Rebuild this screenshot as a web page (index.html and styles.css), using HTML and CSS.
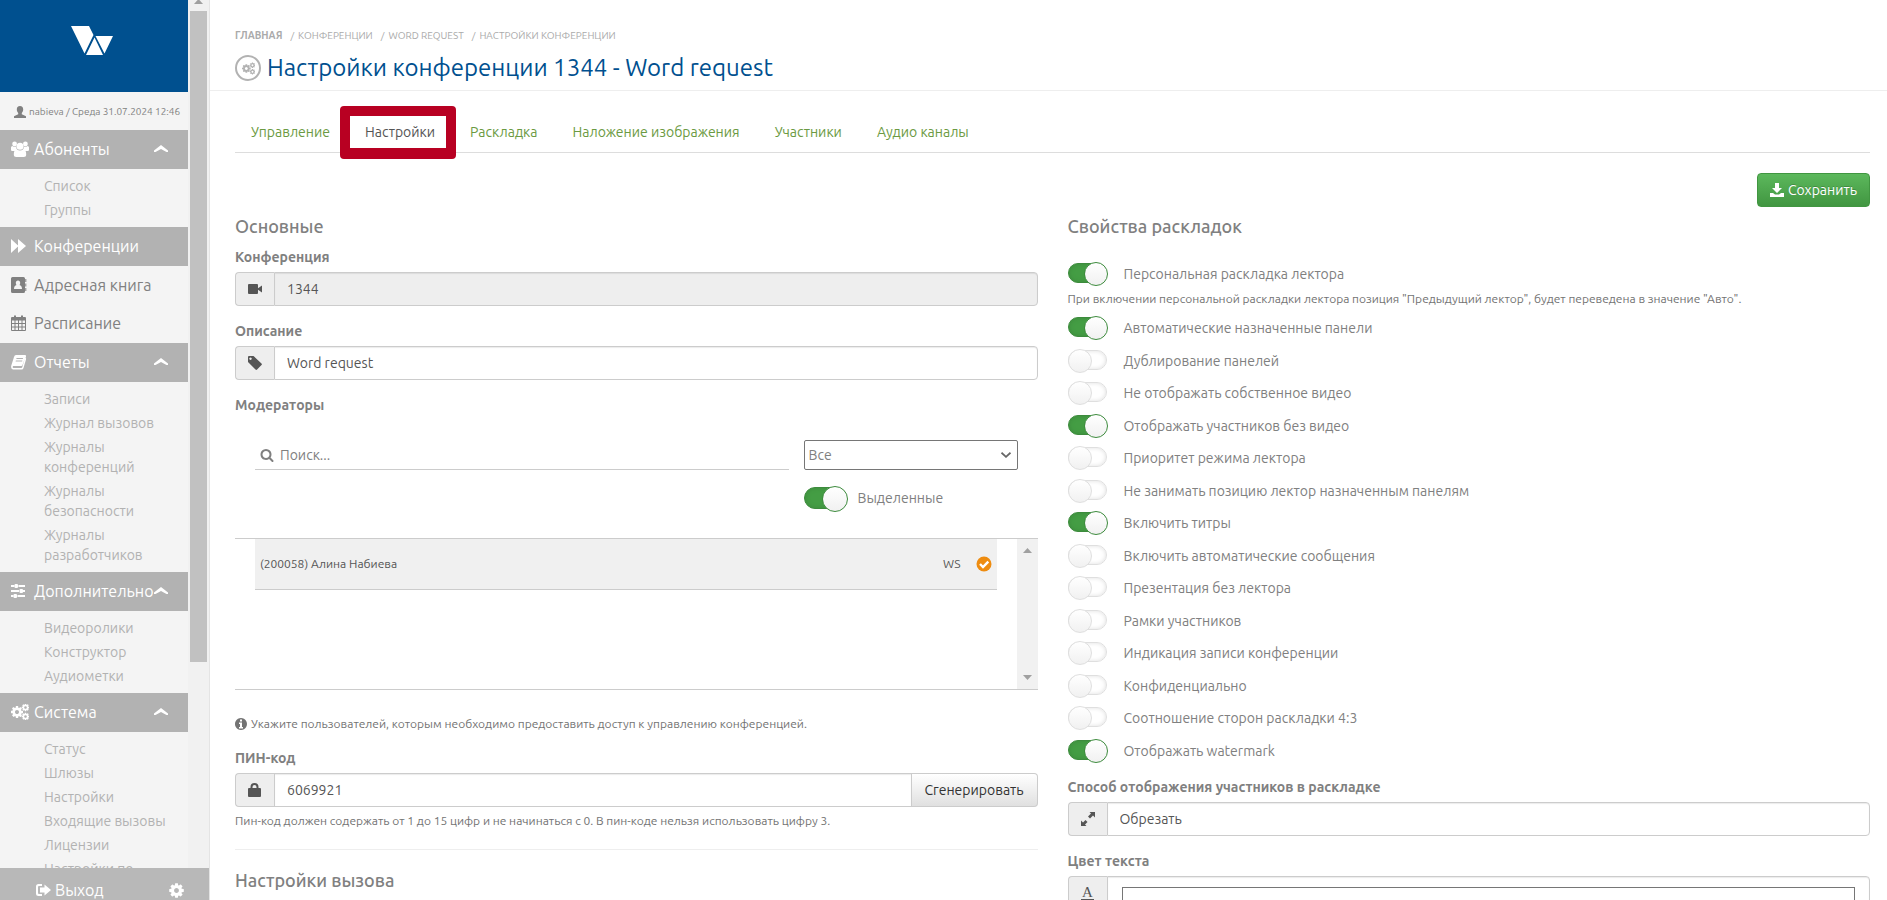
FILE: index.html
```html
<!DOCTYPE html>
<html lang="ru">
<head>
<meta charset="utf-8">
<title>Настройки конференции 1344</title>
<link rel="stylesheet" href="styles.css">
</head>
<body>
<svg class="sprite" aria-hidden="true">
  <symbol id="cog" viewBox="0 0 1792 1792"><path d="M1152 896q0-106-75-181t-181-75-181 75-75 181 75 181 181 75 181-75 75-181zm512-109v222q0 12-8 23t-20 13l-185 28q-19 54-39 91 35 50 107 138 10 12 10 25t-9 23q-27 37-99 108t-94 71q-12 0-26-9l-138-108q-44 23-91 38-16 136-29 186-7 28-36 28h-222q-14 0-24.5-8.5t-11.5-21.5l-28-184q-49-16-90-37l-141 107q-10 9-25 9-14 0-25-11-126-114-165-168-7-10-7-23 0-12 8-23 15-21 51-66.5t54-70.5q-27-50-41-99l-183-27q-13-2-21-12.5t-8-23.5v-222q0-12 8-23t19-13l186-28q14-46 39-92-40-57-107-138-10-12-10-24 0-10 9-23 26-36 98.5-107.5t94.5-71.5q13 0 26 10l138 107q44-23 91-38 16-136 29-186 7-28 36-28h222q14 0 24.5 8.5t11.5 21.5l28 184q49 16 90 37l142-107q9-9 24-9 13 0 25 10 129 119 165 170 7 8 7 22 0 12-8 23-15 21-51 66.5t-54 70.5q26 50 41 98l183 28q13 2 21 12.5t8 23.5z"/></symbol>
  <symbol id="cogs" viewBox="0 0 18 16"><use href="#cog" x="-1" y="1" width="14" height="14"/><use href="#cog" x="10" y="-1" width="9" height="9"/><use href="#cog" x="10" y="8" width="9" height="9"/></symbol>
  <symbol id="users" viewBox="0 0 18 16"><circle cx="3.6" cy="3" r="2.4"/><circle cx="14.4" cy="3" r="2.4"/><path d="M0 9V6.5Q0 5 1.5 5q2 1.6 3.6.6.1 2.400 1.600 3.900L5 10H1.300Q0 10 0 9zM18 9V6.500Q18 5 16.500 5q-2 1.600-3.600.6-.1 2.400-1.600 3.900L13 10h3.700Q18 10 18 9z"/><circle cx="9" cy="5.300" r="3.500"/><path d="M2.800 13.500q0-5 3-5 3.200 2 6.400 0 3 0 3 5 0 2.500-2.500 2.500H5.300q-2.500 0-2.500-2.500z"/></symbol>
  <symbol id="chevron" viewBox="0 0 14 7"><path d="M0 5.500 7 0 14 5.500V7H12.500L7 4 1.500 7H0z"/></symbol>
</svg>
<div class="app">
  <aside class="sidebar">
    <div class="side-scroll">
      <div class="side-body">
        <a class="logo" href="#" aria-label="Главная"><svg width="42" height="29" viewBox="0 0 42 29"><path d="M0 0h18l4.500 9-9 18.500zM24.500 10H42l-8.500 17.500zM23.500 11.500 32 29H15z"/></svg></a>
        <div class="user"><svg width="12" height="12" viewBox="0 0 12 12"><path d="M6 0c2.200 0 3.200 1.500 3.200 3.500 0 1.600-.7 2.500-1.400 3.400v1.300L12 10.300V12H0v-1.700l4.200-2.100V6.900C3.500 6 2.800 5.100 2.800 3.500 2.800 1.500 3.800 0 6 0z"/></svg><span>nabieva / Среда 31.07.2024 12:46</span></div>
        <nav>
          <a class="item dark" href="#"><svg class="ico" width="18" height="16"><use href="#users"/></svg><span>Абоненты</span><svg class="chev" width="14" height="7"><use href="#chevron"/></svg></a>
          <ul class="sub"><li><a href="#">Список</a></li><li><a href="#">Группы</a></li></ul>
          <a class="item dark" href="#"><svg class="ico" width="18" height="16" viewBox="0 0 18 16"><path d="M0 1l7 6.500V1l8 7-8 7V8.500L0 15z"/></svg><span>Конференции</span></a>
          <a class="item" href="#"><svg class="ico" width="18" height="16" viewBox="0 0 18 16"><path fill-rule="evenodd" d="M1.500 0h11Q14 0 14 1.500v13q0 1.500-1.500 1.500h-11Q0 16 0 14.500v-13Q0 0 1.500 0zM7 3.500C5.600 3.500 4.800 4.400 4.800 6c0 .9.400 1.500.7 2C4 8.400 3 9.500 3 12h8c0-2.500-1-3.600-2.500-4 .3-.5.7-1.100.7-2C9.200 4.400 8.400 3.500 7 3.500zM14.300 2h1v3h-1zM14.300 6.500h1v3h-1zM14.300 11h1v3h-1z"/></svg><span>Адресная книга</span></a>
          <a class="item" href="#"><svg class="ico" width="18" height="16" viewBox="0 0 18 16"><path fill-rule="evenodd" d="M1 2h2V.5h2V2h5V.5h2V2h2q1 0 1 1v12q0 1-1 1H1q-1 0-1-1V3q0-1 1-1zM1 5.500V8h2.500V5.500zm3.500 0V8h2.500V5.500zM8 5.500V8h2.500V5.500zm3.500 0V8H14V5.500zM1 9v2.500h2.500V9zm3.500 0v2.500H7V9zM8 9v2.500h2.500V9zm3.500 0v2.500H14V9zM1 12.500V15h2.500v-2.500zm3.500 0V15H7v-2.500zm3.500 0V15h2.500v-2.500zm3.500 0V15H14v-2.500z"/></svg><span>Расписание</span></a>
          <a class="item dark" href="#"><svg class="ico" width="18" height="16" viewBox="0 0 18 16"><path fill-rule="evenodd" d="M5 1h9q1.300 0 1 1.500L14.600 4q.8.300.4 1.500L12.500 14q-.4 1.500-2 1.500H2Q-.5 15 .3 11.500L3 3q.5-2 2-2zM5.600 4l-.3 1h6.500l.3-1zM4.900 6.500l-.3 1h6.500l.3-1zM2 12q-.8 2 .5 2h7.800q.7 0 1-1l2.500-8.500L11.500 11q-.3 1-1.300 1z"/></svg><span>Отчеты</span><svg class="chev" width="14" height="7"><use href="#chevron"/></svg></a>
          <ul class="sub"><li><a href="#">Записи</a></li><li><a href="#">Журнал вызовов</a></li><li><a href="#">Журналы конференций</a></li><li><a href="#">Журналы безопасности</a></li><li><a href="#">Журналы разработчиков</a></li></ul>
          <a class="item dark" href="#"><svg class="ico" width="18" height="16" viewBox="0 0 18 16"><path d="M0 2h3.500v2H0zM7.500 2H14v2H7.500zM0 7h8v2H0zM12 7h2v2h-2zM0 12h2.500v2H0zM6.500 12H14v2H6.500z"/><rect x="3.500" y="1" width="3.500" height="4" rx="1"/><rect x="8.500" y="6" width="3.500" height="4" rx="1"/><rect x="2.500" y="11" width="3.500" height="4" rx="1"/></svg><span>Дополнительно</span><svg class="chev" width="14" height="7"><use href="#chevron"/></svg></a>
          <ul class="sub"><li><a href="#">Видеоролики</a></li><li><a href="#">Конструктор</a></li><li><a href="#">Аудиометки</a></li></ul>
          <a class="item dark" href="#"><svg class="ico" width="18" height="16"><use href="#cogs"/></svg><span>Система</span><svg class="chev" width="14" height="7"><use href="#chevron"/></svg></a>
          <ul class="sub"><li><a href="#">Статус</a></li><li><a href="#">Шлюзы</a></li><li><a href="#">Настройки</a></li><li><a href="#">Входящие вызовы</a></li><li><a href="#">Лицензии</a></li><li><a href="#">Настройки по</a></li></ul>
        </nav>
      </div>
      <div class="track"><svg width="9" height="4" viewBox="0 0 9 4"><path d="M4.500-1 9 4H0z"/></svg><div class="thumb"></div></div>
    </div>
    <div class="side-foot">
      <a href="#"><svg width="15" height="12" viewBox="0 0 15 12"><path d="M6 0v2H3Q2 2 2 3v6q0 1 1 1h3v2H2.500Q0 12 0 9.500v-7Q0 0 2.500 0zM8.500.5l6.500 5.500-6.500 5.500V8.500H4v-5h4.500z"/></svg>Выход</a>
      <a href="#" aria-label="Параметры"><svg width="17" height="17"><use href="#cog"/></svg></a>
    </div>
  </aside>
  <main class="main">
    <header class="head">
      <ol class="crumbs"><li><a href="#"><b>Главная</b></a></li><li><a href="#">Конференции</a></li><li><a href="#">Word request</a></li><li>Настройки конференции</li></ol>
      <h1><span class="ring"><svg width="13" height="13"><use href="#cogs"/></svg></span>Настройки конференции 1344 - Word request</h1>
    </header>
    <div class="content">
      <nav class="tabs"><a href="#">Управление</a><a class="active" href="#">Настройки</a><a href="#">Раскладка</a><a href="#">Наложение изображения</a><a href="#">Участники</a><a href="#">Аудио каналы</a></nav>
      <div class="actions"><button class="save" type="button"><svg width="14" height="14" viewBox="0 0 14 14"><path d="M5 0h4v5h3L7 10 2 5h3zM0 10h3l2 1.500h4L11 10h3v4H0z"/></svg>Сохранить</button></div>
      <form class="cols">
        <section>
          <h2>Основные</h2>
          <label class="lbl" for="conf">Конференция</label>
          <div class="group"><span class="addon"><svg width="14" height="14" viewBox="0 0 14 14"><rect y="2" width="10" height="10" rx="1"/><path d="M10 6.200 14 3.500v7L10 7.800z"/></svg></span><input id="conf" type="text" value="1344" disabled></div>
          <label class="lbl" for="desc">Описание</label>
          <div class="group"><span class="addon"><svg width="14" height="14" viewBox="0 0 14 14"><path fill-rule="evenodd" d="M0 1Q0 0 1 0h4.500l8 7.500q.8.800 0 1.600l-4.400 4.400q-.8.800-1.600 0L0 6zM2.500 1.500a1.200 1.200 0 1 0 .01 0z"/></svg></span><input id="desc" type="text" value="Word request"></div>
          <label class="lbl" for="search">Модераторы</label>
          <div class="filter">
            <div class="search"><svg width="14" height="14" viewBox="0 0 1792 1792"><path d="M1216 832q0-185-131.500-316.500t-316.500-131.500-316.500 131.500-131.500 316.500 131.500 316.500 316.500 131.500 316.500-131.500 131.500-316.500zm512 832q0 52-38 90t-90 38q-54 0-90-38l-343-342q-179 124-399 124-143 0-273.500-55.500t-225-150-150-225-55.500-273.500 55.500-273.500 150-225 225-150 273.500-55.500 273.500 55.500 225 150 150 225 55.500 273.500q0 220-124 399l343 343q37 37 37 90z"/></svg><input id="search" type="text" placeholder="Поиск..."></div>
            <div class="pick">
              <div class="drop"><select aria-label="Фильтр"><option>Все</option></select><svg width="10" height="6" viewBox="0 0 10 6"><path d="M.5.7 5 4.800 9.500.7" fill="none" stroke="#666" stroke-width="1.800"/></svg></div>
              <label class="big"><input class="sw" type="checkbox" checked>Выделенные</label>
            </div>
          </div>
          <div class="list">
            <div class="rows"><div class="row"><span>(200058) Алина Набиева</span><span>WS</span><svg width="16" height="16" viewBox="0 0 16 16"><circle cx="8" cy="8" r="7.500" fill="#ee8c10"/><path d="M4 8l3 3 5.300-5.300" fill="none" stroke="#fff" stroke-width="2.400"/></svg></div></div>
            <div class="bar"><svg width="9" height="5" viewBox="0 0 9 5"><path d="M4.500 0 9 5H0z"/></svg><svg width="9" height="5" viewBox="0 0 9 5"><path d="M4.500 5 9 0H0z"/></svg></div>
          </div>
          <p class="note info"><svg width="12" height="12" viewBox="0 0 12 12"><path fill-rule="evenodd" d="M6 0a6 6 0 1 1-.01 0zM5 1.500v2h2v-2zM4 4.500V6h1v3H4v1.500h4V9H7V4.500z"/></svg>Укажите пользователей, которым необходимо предоставить доступ к управлению конференцией.</p>
          <label class="lbl" for="pin">ПИН-код</label>
          <div class="group"><span class="addon"><svg width="14" height="14" viewBox="0 0 14 14"><path fill-rule="evenodd" d="M2.500 5V4Q2.500 0 6.500 0t4 4v1h1.500q1 0 1 1v7q0 1-1 1H1q-1 0-1-1V6q0-1 1-1zM4.500 5h4V4q0-2-2-2t-2 2z"/></svg></span><input id="pin" type="text" value="6069921"><button class="gen" type="button">Сгенерировать</button></div>
          <p class="note">Пин-код должен содержать от 1 до 15 цифр и не начинаться с 0. В пин-коде нельзя использовать цифру 3.</p>
          <hr>
          <h2>Настройки вызова</h2>
        </section>
        <section>
          <h2>Свойства раскладок</h2>
          <label class="opt first"><input class="sw" type="checkbox" checked>Персональная раскладка лектора</label>
          <p class="note tight">При включении персональной раскладки лектора позиция "Предыдущий лектор", будет переведена в значение "Авто".</p>
          <div class="opts">
            <label class="opt"><input class="sw" type="checkbox" checked>Автоматические назначенные панели</label>
            <label class="opt"><input class="sw" type="checkbox">Дублирование панелей</label>
            <label class="opt"><input class="sw" type="checkbox">Не отображать собственное видео</label>
            <label class="opt"><input class="sw" type="checkbox" checked>Отображать участников без видео</label>
            <label class="opt"><input class="sw" type="checkbox">Приоритет режима лектора</label>
            <label class="opt"><input class="sw" type="checkbox">Не занимать позицию лектор назначенным панелям</label>
            <label class="opt"><input class="sw" type="checkbox" checked>Включить титры</label>
            <label class="opt"><input class="sw" type="checkbox">Включить автоматические сообщения</label>
            <label class="opt"><input class="sw" type="checkbox">Презентация без лектора</label>
            <label class="opt"><input class="sw" type="checkbox">Рамки участников</label>
            <label class="opt"><input class="sw" type="checkbox">Индикация записи конференции</label>
            <label class="opt"><input class="sw" type="checkbox">Конфиденциально</label>
            <label class="opt"><input class="sw" type="checkbox">Соотношение сторон раскладки 4:3</label>
            <label class="opt"><input class="sw" type="checkbox" checked>Отображать watermark</label>
          </div>
          <label class="lbl" for="mode">Способ отображения участников в раскладке</label>
          <div class="group"><span class="addon"><svg width="16" height="16" viewBox="0 0 16 16"><path d="M9.500 1H15v5.500l-2-2-3 3L8 5.500l3-3zM6.500 15H1V9.500l2 2 2.500-2.500 2 2L5 13.500z"/></svg></span><select id="mode"><option>Обрезать</option></select></div>
          <label class="lbl" for="color">Цвет текста</label>
          <div class="group"><span class="addon"><span class="letter">A</span></span><span class="well"><input id="color" type="color" value="#ffffff"></span></div>
        </section>
      </form>
    </div>
  </main>
</div>
</body>
</html>
```

FILE: styles.css
```css
* { box-sizing: border-box; }
body { margin: 0; font: 14px/20px Ubuntu, "Noto Sans", sans-serif; color: #808080; background: #fff; }
a { color: inherit; text-decoration: none; }
svg { fill: currentColor; flex: none; display: block; }
input, select, button { font: inherit; color: inherit; margin: 0; }
ul, ol { list-style: none; margin: 0; padding: 0; }
.sprite { position: absolute; width: 0; height: 0; }
.app { display: flex; height: 100vh; overflow: hidden; }

.sidebar { width: 210px; flex: none; display: flex; flex-direction: column; background: #f4f4f4; border-right: 1px solid #e4e4e4; }
.side-scroll { flex: 1; min-height: 0; display: flex; overflow: hidden; }
.side-body { flex: 1; overflow: hidden; }
.track { width: 21px; padding: 0 2px; background: #f1f1f1; color: #a0a0a0; display: flex; flex-direction: column; align-items: center; gap: 7px; }
.thumb { width: 100%; flex: none; height: 75%; background: #c1c1c1; }
.logo { height: 92px; background: #00508f; color: #fff; display: flex; justify-content: center; padding: 26px 4px 0 0; }
.user { height: 38px; display: flex; align-items: center; gap: 3px; padding: 2px 0 0 14px; font: 10px/16px "Ubuntu Condensed", Ubuntu, sans-serif; white-space: nowrap; }
.item { height: 39px; display: flex; align-items: center; gap: 5px; padding: 0 20px 1px 11px; font-size: 16px; }
.item:nth-of-type(3) { height: 38px; }
.dark { background: #b2b2b2; color: #fff; }
.item span { flex: 1; min-width: 0; white-space: nowrap; }
.chev { margin-bottom: 1px; }
.sub { padding: 5px 10px 5px 44px; color: #b2b2b2; }
.sub a { display: block; padding: 2px 0; }
.side-foot { height: 32px; flex: none; background: #b8b8b8; color: #fff; display: flex; justify-content: space-between; align-items: flex-end; padding: 0 24px 0 36px; font-size: 16px; overflow: hidden; }
.side-foot a { display: flex; align-items: center; gap: 4px; }
.side-foot a:last-child { padding-bottom: 1px; }

.main { flex: 1; min-width: 0; overflow: hidden; }
.head { height: 91px; padding: 26px 25px 0; border-bottom: 1px solid #eee; }
.crumbs { display: flex; font-size: 10px; text-transform: uppercase; color: #aaa; }
.crumbs li + li::before { content: "/"; padding: 0 4px 0 8px; }
h1 { display: flex; align-items: center; gap: 6px; margin: 7px 0 0; font-size: 24px; line-height: 30px; font-weight: 400; color: #00508f; }
.ring { width: 26px; height: 26px; border: 2px solid #b2b2b2; border-radius: 50%; color: #b2b2b2; display: flex; align-items: center; justify-content: center; }
.content { padding: 20px 17px 0 25px; }
.tabs { display: flex; height: 42px; border-bottom: 1px solid #ddd; color: #6b9a42; padding-left: 16px; gap: 35px; align-items: center; }
.active { color: #555; position: relative; }
.active::after { content: ""; position: absolute; inset: -16px -21px -17px -25px; border: 10px solid #b80022; border-bottom-width: 11px; border-radius: 4px; }
.actions { display: flex; justify-content: flex-end; padding-top: 20px; }
.save { display: flex; align-items: center; gap: 4px; height: 34px; padding: 0 12px; color: #fff; border: 1px solid #419641; border-radius: 4px; background: linear-gradient(#5cb85c, #419641); text-shadow: 0 -1px 0 rgba(0,0,0,.2); }
.cols { display: grid; grid-template-columns: 1fr 1fr; gap: 30px; padding-top: 9px; }
h2 { margin: 0 0 11px; font-size: 18px; line-height: 20px; font-weight: 500; }
.lbl { display: block; font-weight: 700; margin-bottom: 5px; }
.group { display: flex; height: 34px; margin-bottom: 15px; color: #555; }
.addon { width: 39px; flex: none; display: flex; align-items: center; justify-content: center; background: #eee; border: 1px solid #ccc; border-right: 0; border-radius: 4px 0 0 4px; }
.group input[type=text], .group select, .well { flex: 1; min-width: 0; border: 1px solid #ccc; border-radius: 0 4px 4px 0; padding: 0 12px; background: #fff; box-shadow: inset 0 1px 1px rgba(0,0,0,.08); appearance: none; outline: 0; }
.group input[type=text]:disabled { background: #eee; }
.group input#pin { border-radius: 0; }
.gen { width: 126px; border: 1px solid #ccc; border-left: 0; border-radius: 0 4px 4px 0; background: linear-gradient(#fff, #e0e0e0); color: #333; padding: 0; }
.filter { display: grid; grid-template-columns: 1fr 214px; gap: 15px; padding: 20px 20px 0; height: 118px; align-items: start; }
.search { display: flex; align-items: center; gap: 6px; height: 30px; padding-left: 5px; border-bottom: 1px solid #ccc; }
.search input { flex: 1; border: 0; padding: 0; outline: 0; }
.search input::placeholder { color: #808080; }
.drop { position: relative; }
.drop select { display: block; width: 100%; height: 30px; border: 1px solid #767676; border-radius: 2px; background: #fff; padding: 0 4px; appearance: none; }
.drop svg { position: absolute; right: 7px; top: 12px; pointer-events: none; }
.big { display: flex; align-items: center; gap: 11px; margin-top: 15px; height: 25px; }
.list { display: flex; height: 152px; border: solid #ccc; border-width: 1px 0; margin-bottom: 25px; }
.rows { flex: 1; padding: 0 20px; }
.row { display: flex; align-items: center; gap: 15px; height: 51px; padding: 0 5px; background: #f0f0f0; border-bottom: 1px solid #ccc; font-size: 12px; color: #555; }
.row span:first-child { flex: 1; }
.bar { width: 21px; background: #f1f1f1; color: #a0a0a0; display: flex; flex-direction: column; justify-content: space-between; align-items: center; padding: 9px 0; }
.note { margin: 0; font-size: 12px; line-height: 18px; color: #737373; }
.info { display: flex; align-items: center; gap: 4px; margin-bottom: 15px; }
.group + .note { margin-top: -10px; }
hr { border: 0; border-top: 1px solid #eee; margin: 19px 0 20px; }

.sw { appearance: none; position: relative; flex: none; width: 39px; height: 20px; border: 1px solid #dfdfdf; border-radius: 12px; box-shadow: inset 0 0 4px #dfdfdf; background: #fff; }
.sw::after { content: ""; position: absolute; top: -2px; left: -1px; width: 22px; height: 22px; border: 1px solid #dfdfdf; border-radius: 50%; background: linear-gradient(#fff, #f1f1f1); }
.sw:checked { background: #449d44; border-color: #3d8b3d; box-shadow: inset 0 0 4px #3d8b3d; }
.sw:checked::after { left: auto; right: -2px; border-color: #3d8b3d; }
.big .sw { width: 43px; height: 22px; }
.big .sw::after { width: 24px; height: 24px; }
.opt { display: flex; align-items: center; gap: 17px; }
.opt .sw { margin-bottom: 2px; }
.first { margin-top: 28px; height: 20px; }
.tight { margin: 6px 0 4px; }
.opts { display: grid; grid-auto-rows: 1fr; min-height: 455px; margin-bottom: 10px; }
.letter { font: 15px/14px "Liberation Serif", serif; border-bottom: 2px solid #555; padding: 0 1px; }
.well { display: flex; align-items: flex-start; padding: 10px 14px; }
.well input { width: 100%; height: 14px; padding: 0; border: 1px solid #767676; background: #fff; border-radius: 0; appearance: none; }
.well input::-webkit-color-swatch-wrapper { padding: 0; }
.well input::-webkit-color-swatch { border: 0; }
```
